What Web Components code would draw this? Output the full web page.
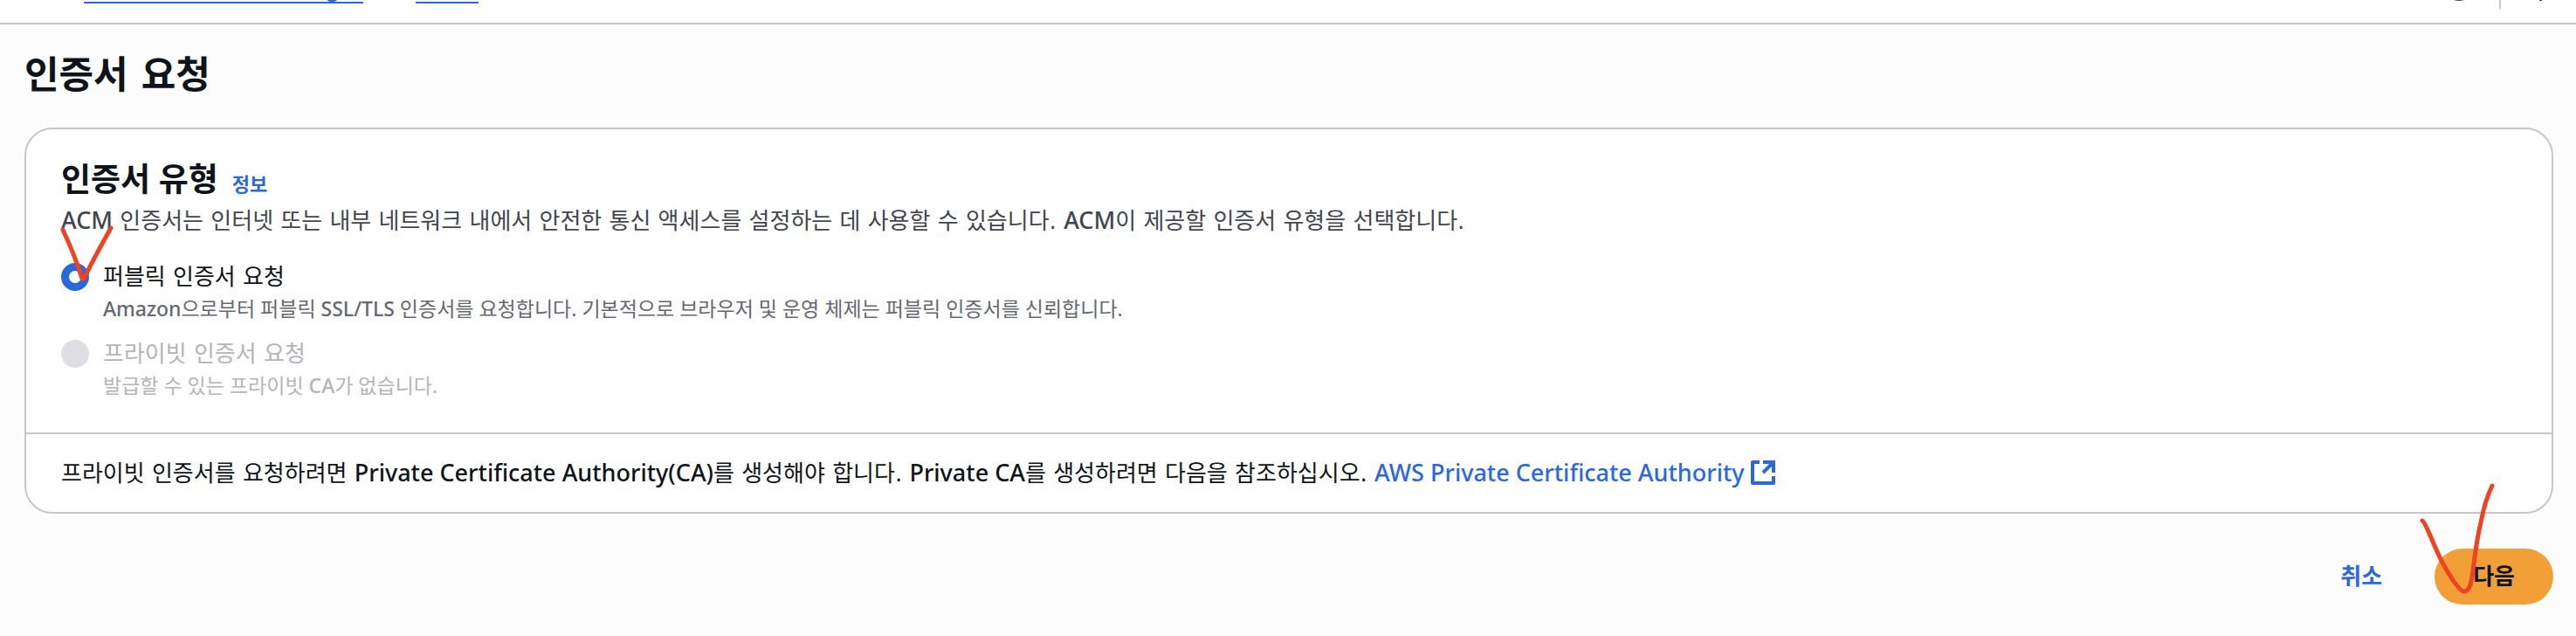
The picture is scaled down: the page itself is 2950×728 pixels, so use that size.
<!DOCTYPE html>
<html lang="ko">
<head>
<meta charset="UTF-8">
<title>인증서 요청</title>
<style>
  body {
    margin: 0;
    background-color: #fcfcfd;
    color: #0f141a;
    font-family: 'DejaVu Sans', 'Noto Sans CJK KR', sans-serif;
    font-size: 26px;
    line-height: 40px;
    --latin: 'Noto Sans', 'Noto Sans CJK KR', sans-serif;
  }
</style>
</head>
<body>
<request-page></request-page>

<script>
class CrumbBar extends HTMLElement {
  connectedCallback() {
    this.attachShadow({ mode: 'open' });
    this.shadowRoot.innerHTML = `
      <style>
        :host {
          display: flex;
          justify-content: space-between;
          align-items: flex-end;
          height: 26px;
          overflow: hidden;
          padding: 0 24px 0 96px;
          background-color: #fff;
          border-bottom: 2px solid #c6c6cd;
        }
        nav {
          display: flex;
          gap: 60px;
          padding-bottom: 22px;
        }
        a {
          color: #2b68d9;
          text-decoration: none;
          line-height: 34px;
          border-bottom: 2px solid;
        }
        [lang=en] {
          font-family: var(--latin);
          font-size: 27px;
          font-weight: 500;
        }
        .tools {
          display: flex;
          align-items: flex-end;
          gap: 30px;
          padding-bottom: 16px;
        }
        svg {
          display: block;
          width: 32px;
          height: 32px;
          padding-bottom: 9px;
          fill: none;
          stroke: #424650;
          stroke-width: 3;
        }
        .rule {
          width: 2px;
          height: 32px;
          background-color: #c6c6cd;
        }
      </style>
      <nav>
        <a href="#acm" lang="en">AWS Certificate Manager</a>
        <a href="#list">인증서</a>
      </nav>
      <div class="tools">
        <svg viewBox="0 0 32 32"><circle cx="16" cy="16" r="14.5"/></svg>
        <div class="rule"></div>
        <svg viewBox="0 0 32 32"><path d="M15.5 17v15"/></svg>
      </div>
    `;
  }
}

class InfoCard extends HTMLElement {
  connectedCallback() {
    this.attachShadow({ mode: 'open' });
    this.shadowRoot.innerHTML = `
      <style>
        :host {
          display: block;
          background-color: #fff;
          border: 2px solid #c6c6cd;
          border-radius: 32px;
        }
        header {
          padding: 32px 40px 0;
        }
        .content {
          display: flex;
          flex-direction: column;
          gap: 16px;
          padding: 24px 40px 38px;
        }
        footer {
          padding: 24px 40px;
          border-top: 2px solid #c6c6cd;
        }
      </style>
      <header><slot name="header"></slot></header>
      <div class="content"><slot></slot></div>
      <footer><slot name="footer"></slot></footer>
    `;
  }
}

class RadioOption extends HTMLElement {
  connectedCallback() {
    const checked = this.hasAttribute('checked') ? 'checked' : '';
    const disabled = this.hasAttribute('disabled') ? 'disabled' : '';
    this.attachShadow({ mode: 'open' });
    this.shadowRoot.innerHTML = `
      <style>
        :host {
          display: block;
        }
        label {
          display: grid;
          grid-template-columns: 32px auto;
          justify-content: start;
          align-items: center;
          column-gap: 16px;
        }
        input {
          appearance: none;
          width: 32px;
          height: 32px;
          margin: 0;
          border: 2px solid #8c8c94;
          border-radius: 50%;
          background-color: #fff;
        }
        input:checked {
          border: 9px solid #2b68d9;
        }
        input:disabled {
          border-color: #dedee3;
          background-color: #dedee3;
        }
        .hint {
          grid-column: 2;
          color: #656871;
          font-family: var(--latin);
          font-size: 23px;
          line-height: 32px;
        }
        :host([disabled]) span {
          color: #b4b4bb;
        }
      </style>
      <label>
        <input type="radio" name="type" ${checked} ${disabled}>
        <span><slot></slot></span>
        <span class="hint"><slot name="hint"></slot></span>
      </label>
    `;
  }
}

class ExternalLink extends HTMLElement {
  connectedCallback() {
    this.attachShadow({ mode: 'open' });
    this.shadowRoot.innerHTML = `
      <style>
        :host {
          display: inline;
        }
        a {
          color: #2b68d9;
          text-decoration: none;
        }
        svg {
          width: 28px;
          height: 28px;
          vertical-align: -4px;
          fill: none;
          stroke: currentColor;
          stroke-width: 4;
        }
      </style>
      <a href="#private-ca"><slot></slot> <svg viewBox="0 0 28 28">
        <path stroke-linejoin="round" d="M10 2H2v24h24v-8"/>
        <path d="M14 2h12v12M25 3L14 14"/>
      </svg></a>
    `;
  }
}

class ActionButton extends HTMLElement {
  connectedCallback() {
    this.attachShadow({ mode: 'open' });
    this.shadowRoot.innerHTML = `
      <style>
        :host {
          display: block;
        }
        button {
          display: block;
          height: 64px;
          padding: 0 44px;
          border: 0;
          border-radius: 32px;
          background: none;
          color: #2b68d9;
          font: inherit;
          font-weight: 700;
        }
        :host([primary]) button {
          background-color: #f29f38;
          color: #0f141a;
        }
      </style>
      <button type="button"><slot></slot></button>
    `;
  }
}

// hand-drawn tick that lies over the control it is slotted next to
class PenTick extends HTMLElement {
  connectedCallback() {
    this.attachShadow({ mode: 'open' });
    this.shadowRoot.innerHTML = `
      <style>
        :host {
          position: absolute;
          pointer-events: none;
        }
        svg {
          display: block;
          overflow: visible;
          fill: none;
          stroke: #ed4223;
          stroke-width: 5;
          stroke-linecap: round;
          stroke-linejoin: round;
        }
      </style>
      <svg width="${this.getAttribute('width')}" height="${this.getAttribute('height')}">
        <path d="${this.getAttribute('path')}"/>
      </svg>
    `;
  }
}

class RequestPage extends HTMLElement {
  connectedCallback() {
    this.attachShadow({ mode: 'open' });
    this.shadowRoot.innerHTML = `
      <style>
        :host {
          display: block;
        }
        main {
          padding: 26px 26px 36px 28px;
        }
        h1 {
          margin: 0 0 28px;
          font-size: 43px;
          line-height: 64px;
        }
        .heading {
          display: flex;
          align-items: baseline;
          gap: 16px;
        }
        h2 {
          margin: 0;
          font-family: var(--latin);
          font-size: 37px;
          line-height: 50px;
        }
        .heading a {
          color: #2b68d9;
          font-size: 22px;
          font-weight: 700;
          text-decoration: none;
        }
        p {
          margin: 0;
        }
        .intro {
          color: #424650;
        }
        p [lang=en] {
          font-family: var(--latin);
          font-size: 27px;
          font-weight: 500;
        }
        .hint-text [lang=en] {
          font-weight: 500;
        }
        .marked {
          position: relative;
        }
        .marked .on-radio {
          left: 2px;
          top: -36px;
        }
        .marked .on-button {
          left: -14px;
          top: -74px;
        }
        .actions {
          display: flex;
          justify-content: flex-end;
          gap: 16px;
          margin-top: 40px;
        }
      </style>
      <crumb-bar></crumb-bar>
      <main>
        <h1>인증서 요청</h1>
        <info-card>
          <div slot="header">
            <div class="heading">
              <h2>인증서 유형</h2>
              <a href="#info">정보</a>
            </div>
            <p class="intro"><span lang="en">ACM</span> 인증서는 인터넷 또는 내부 네트워크 내에서 안전한 통신 액세스를 설정하는 데 사용할 수 있습니다. <span lang="en">ACM</span>이 제공할 인증서 유형을 선택합니다.</p>
          </div>
          <div class="marked">
            <radio-option checked>
              퍼블릭 인증서 요청
              <span slot="hint" class="hint-text"><span lang="en">Amazon</span>으로부터 퍼블릭 <span lang="en">SSL/TLS</span> 인증서를 요청합니다. 기본적으로 브라우저 및 운영 체제는 퍼블릭 인증서를 신뢰합니다.</span>
            </radio-option>
            <pen-tick class="on-radio" width="56" height="58" path="M0 2Q14 32 22 58H24Q38 30 55 0"></pen-tick>
          </div>
          <radio-option disabled>
            프라이빗 인증서 요청
            <span slot="hint" class="hint-text">발급할 수 있는 프라이빗 <span lang="en">CA</span>가 없습니다.</span>
          </radio-option>
          <p slot="footer">프라이빗 인증서를 요청하려면 <span lang="en">Private Certificate Authority(CA)</span>를 생성해야 합니다. <span lang="en">Private CA</span>를 생성하려면 다음을 참조하십시오. <external-link lang="en">AWS Private Certificate Authority</external-link></p>
        </info-card>
        <div class="actions">
          <action-button>취소</action-button>
          <div class="marked">
            <action-button primary>다음</action-button>
            <pen-tick class="on-button" width="81" height="122" path="M0 42C4 44 12 68 22 88C30 103 42 123 48 123C60 122 56 90 67 44Q72 18 80 2"></pen-tick>
          </div>
        </div>
      </main>
    `;
  }
}

customElements.define('crumb-bar', CrumbBar);
customElements.define('info-card', InfoCard);
customElements.define('radio-option', RadioOption);
customElements.define('external-link', ExternalLink);
customElements.define('action-button', ActionButton);
customElements.define('pen-tick', PenTick);
customElements.define('request-page', RequestPage);
</script>
</body>
</html>
